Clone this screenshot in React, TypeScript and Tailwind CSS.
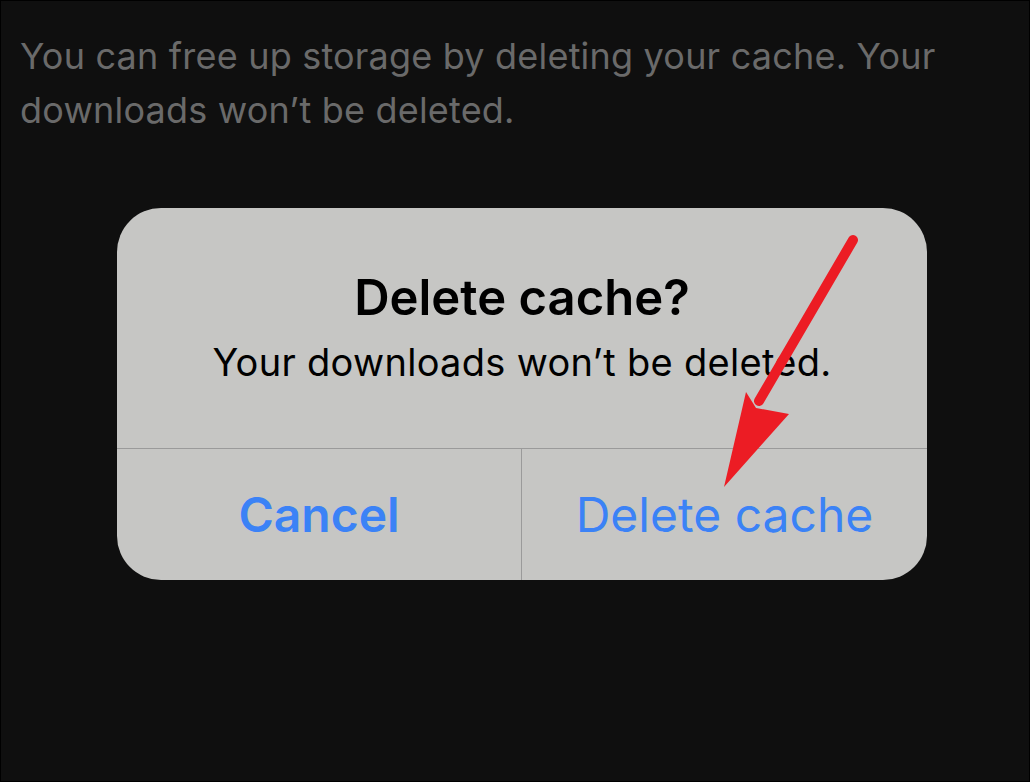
import React from "react";

export default function App() {
  return (
    <div
      className="relative w-[1030px] h-[782px] bg-[#0f0f0f] border border-black overflow-hidden"
      style={{ fontFamily: "Inter, 'Noto Sans', sans-serif" }}
    >
      <p className="pl-[19px] pt-[28px] text-[36px] leading-[54px] text-[#6a6a6a] tracking-[0.2px]">
        You can free up storage by deleting your cache. Your downloads won’t be deleted.
      </p>
      <div className="ml-[116px] mt-[71px] w-[810px] h-[372px] rounded-[44px] bg-[#c6c6c4] flex flex-col overflow-hidden">
        <div className="h-[240px] flex flex-col items-center pt-[60px]">
          <div className="text-[49px] leading-[60px] font-semibold text-black">Delete cache?</div>
          <div className="text-[38px] leading-[46px] text-black mt-[11px] tracking-[0.3px]">
            Your downloads won’t be deleted.
          </div>
        </div>
        <div className="flex-1 flex border-t border-[#9a9a9a]">
          <div className="w-[405px] flex items-center justify-center border-r border-[#9a9a9a]">
            <span className="text-[48px] font-semibold text-[#3b82f6]">Cancel</span>
          </div>
          <div className="flex-1 flex items-center justify-center">
            <span className="text-[48px] text-[#3b82f6]">Delete cache</span>
          </div>
        </div>
      </div>
      <svg className="absolute left-0 top-0" width="1030" height="782" viewBox="0 0 1030 782">
        <line x1="852" y1="239" x2="758" y2="400" stroke="#ec1c24" strokeWidth="10" strokeLinecap="round" />
        <polygon points="723,486 745,391 755,407 788,413" fill="#ec1c24" />
      </svg>
    </div>
  );
}
